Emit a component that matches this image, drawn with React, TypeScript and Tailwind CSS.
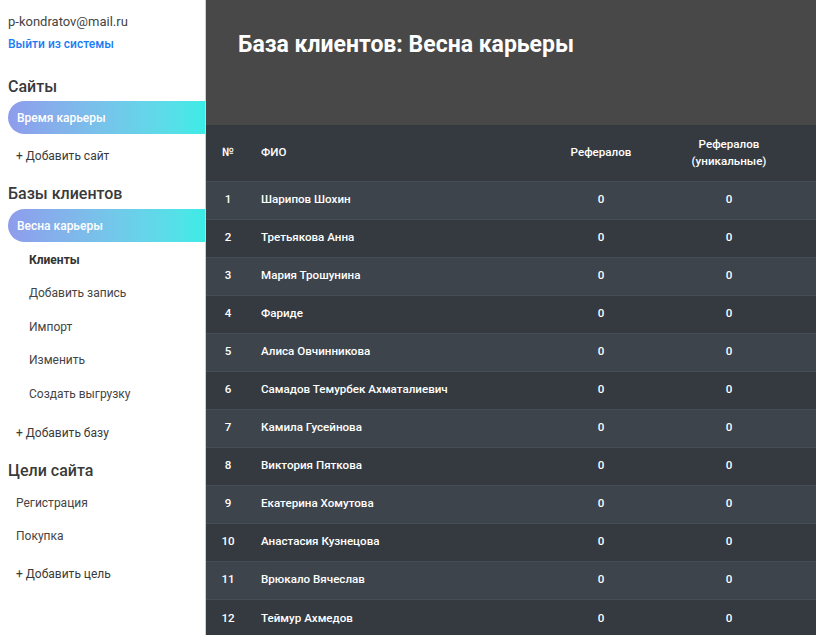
import React from 'react';

const clients = [
  'Шарипов Шохин',
  'Третьякова Анна',
  'Мария Трошунина',
  'Фариде',
  'Алиса Овчинникова',
  'Самадов Темурбек Ахматалиевич',
  'Камила Гусейнова',
  'Виктория Пяткова',
  'Екатерина Хомутова',
  'Анастасия Кузнецова',
  'Врюкало Вячеслав',
  'Теймур Ахмедов',
];

const Pill = ({ label, className }: { label: string; className?: string }) => (
  <div
    className={`ml-2 flex h-[33px] items-center rounded-l-full bg-gradient-to-r from-[#8e9cec] to-[#3becE6] pl-[9px] text-[12px] font-medium text-white ${className ?? ''}`}
  >
    {label}
  </div>
);

const Sidebar = () => (
  <aside className="flex w-[206px] shrink-0 flex-col border-r border-[#cfcfcf] bg-white pt-3 text-[#3a3a3a]">
    <div className="h-5 pl-2 text-[13px] leading-5 text-[#444]">p-kondratov@mail.ru</div>
    <a className="mt-[2px] h-5 pl-2 text-[12px] font-medium leading-5 text-[#1a7cf5]">Выйти из системы</a>

    <div className="mt-[21px] h-6 pl-2 text-[16px] font-medium leading-6 text-[#3a3a3a]">Сайты</div>
    <Pill label="Время карьеры" className="mt-[2px]" />
    <div className="mt-[5px] flex h-[34px] items-center pl-4 text-[12px]">+ Добавить сайт</div>

    <div className="mt-[9px] h-6 pl-2 text-[16px] font-medium leading-6">Базы клиентов</div>
    <Pill label="Весна карьеры" className="mt-[3px]" />
    <div className="mt-[1px] flex flex-col pl-[29px] text-[12px] text-[#444]">
      <div className="flex h-[33.5px] items-center font-bold text-[#333]">Клиенты</div>
      <div className="flex h-[33.5px] items-center">Добавить запись</div>
      <div className="flex h-[33.5px] items-center">Импорт</div>
      <div className="flex h-[33.5px] items-center">Изменить</div>
      <div className="flex h-[33.5px] items-center">Создать выгрузку</div>
    </div>
    <div className="mt-[5.5px] flex h-[34px] items-center pl-4 text-[12px]">+ Добавить базу</div>

    <div className="mt-[9px] h-6 pl-2 text-[16px] font-medium leading-6">Цели сайта</div>
    <div className="mt-[3px] flex h-[33.5px] items-center pl-4 text-[12px] text-[#444]">Регистрация</div>
    <div className="flex h-[33.5px] items-center pl-4 text-[12px] text-[#444]">Покупка</div>
    <div className="mt-[4px] flex h-[34px] items-center pl-4 text-[12px]">+ Добавить цель</div>
  </aside>
);

export default function App() {
  return (
    <div className="flex min-h-screen font-['Roboto','Liberation_Sans',sans-serif]">
      <Sidebar />
      <main className="flex-1 bg-[#343a40]">
        <header className="h-[125px] bg-[#484848] pl-8 pt-[29px]">
          <h1 className="text-[23px] font-bold leading-8 text-white">База клиентов: Весна карьеры</h1>
        </header>
        <table className="w-full table-fixed border-collapse text-[11.6px] font-medium text-white">
          <colgroup>
            <col className="w-[44px]" />
            <col />
            <col className="w-[82px]" />
            <col className="w-[174px]" />
          </colgroup>
          <thead>
            <tr className="h-[56px] bg-[#343a40]">
              <th className="text-center font-medium">№</th>
              <th className="pl-[11px] text-left font-medium">ФИО</th>
              <th className="text-center font-medium">Рефералов</th>
              <th className="text-center font-medium leading-[17px]">
                Рефералов
                <br />
                (уникальные)
              </th>
            </tr>
          </thead>
          <tbody>
            {clients.map((name, i) => (
              <tr
                key={i}
                className={`h-[38px] border-t border-[#484e55] ${i % 2 === 0 ? 'bg-[#3e444b]' : 'bg-[#343a40]'}`}
              >
                <td className="text-center">{i + 1}</td>
                <td className="pl-[11px]">{name}</td>
                <td className="text-center">0</td>
                <td className="text-center">0</td>
              </tr>
            ))}
          </tbody>
        </table>
      </main>
    </div>
  );
}
